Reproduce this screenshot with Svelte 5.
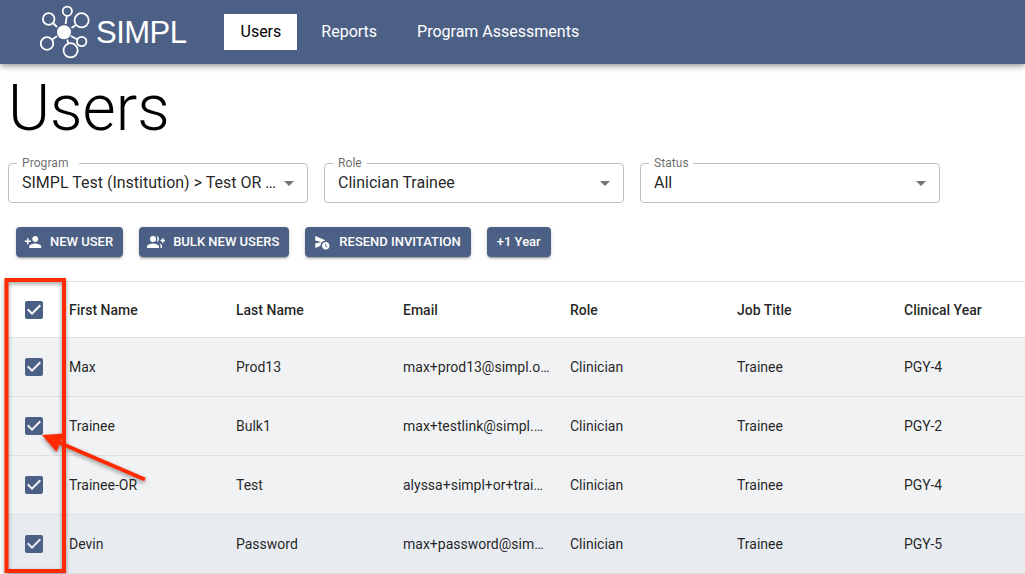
<script lang="ts">
  interface User {
    first: string;
    last: string;
    email: string;
    role: string;
    title: string;
    year: string;
    hovered?: boolean;
  }

  const navItems = ['Users', 'Reports', 'Program Assessments'];
  let activeNav = 'Users';

  const filters = [
    { label: 'Program', value: 'SIMPL Test (Institution) > Test OR Program', notch: 62 },
    { label: 'Role', value: 'Clinician Trainee', notch: 34 },
    { label: 'Status', value: 'All', notch: 44 },
  ];

  const columns = ['First Name', 'Last Name', 'Email', 'Role', 'Job Title', 'Clinical Year'];

  const users: User[] = [
    { first: 'Max', last: 'Prod13', email: 'max+prod13@simpl.org', role: 'Clinician', title: 'Trainee', year: 'PGY-4' },
    { first: 'Trainee', last: 'Bulk1', email: 'max+testlink@simpl.org', role: 'Clinician', title: 'Trainee', year: 'PGY-2' },
    { first: 'Trainee-OR', last: 'Test', email: 'alyssa+simpl+or+trai…', role: 'Clinician', title: 'Trainee', year: 'PGY-4' },
    { first: 'Devin', last: 'Password', email: 'max+password@simpl.org', role: 'Clinician', title: 'Trainee', year: 'PGY-5', hovered: true },
  ];
</script>

{#snippet checkbox()}
  <span class="check-cell" role="checkbox" aria-checked="true" tabindex="0">
    <svg class="check" viewBox="0 0 24 24">
      <path d="M19 3H5c-1.11 0-2 .9-2 2v14c0 1.1.89 2 2 2h14c1.11 0 2-.9 2-2V5c0-1.1-.89-2-2-2zm-9 14l-5-5 1.41-1.41L10 14.17l7.59-7.59L19 8l-9 9z" />
    </svg>
  </span>
{/snippet}

<div class="page">
  <header class="app-bar">
    <div class="brand">
      <svg class="brand-mark" width="52" height="56" viewBox="38 4 52 56">
        <g fill="none" stroke="#fff" stroke-width="1.8">
          <circle cx="67.3" cy="11.2" r="4.6" />
          <circle cx="48.7" cy="19" r="5.8" />
          <circle cx="81.6" cy="20.3" r="7.1" />
          <circle cx="47" cy="43.5" r="6.3" />
          <circle cx="70.6" cy="50.3" r="7.1" />
          <circle cx="81.7" cy="41.5" r="4.7" />
          <path d="M66.8 16 65.6 24M53 23 57 27M76 25 71.5 28M52 39.5 57 36.3M67.2 39.5 68.3 43.5M70.8 36 77.5 39.5" />
        </g>
        <circle cx="64" cy="32.3" r="7" fill="#fff" />
      </svg>
      <span class="brand-name">SIMPL</span>
    </div>
    <nav>
      {#each navItems as item}
        <button class="nav-item" class:active={item === activeNav} on:click={() => (activeNav = item)}>{item}</button>
      {/each}
    </nav>
  </header>

  <main>
    <h1>Users</h1>

    <div class="filters">
      {#each filters as filter}
        <div class="select">
          <span class="select-label" style="width: {filter.notch}px">{filter.label}</span>
          <span class="select-value">{filter.value}</span>
          <svg class="caret" viewBox="0 0 24 24"><path d="M7 10l5 5 5-5z" /></svg>
        </div>
      {/each}
    </div>

    <div class="actions">
      <button class="action">
        <svg viewBox="0 0 24 24">
          <path d="M15 12c2.21 0 4-1.79 4-4s-1.79-4-4-4-4 1.79-4 4 1.79 4 4 4zm-9-2V7H4v3H1v2h3v3h2v-3h3v-2H6zm9 4c-2.67 0-8 1.34-8 4v2h16v-2c0-2.66-5.33-4-8-4z" />
        </svg>
        NEW USER
      </button>
      <button class="action">
        <svg viewBox="0 0 24 24">
          <path d="M22 9V7h-2v2h-2v2h2v2h2v-2h2V9z" />
          <circle cx="8" cy="8" r="4" />
          <path d="M8 14c-2.67 0-8 1.34-8 4v2h16v-2c0-2.66-5.33-4-8-4zM12.51 4.05C13.43 5.11 14 6.49 14 8s-.57 2.89-1.49 3.95C14.47 11.7 16 10.04 16 8s-1.53-3.7-3.49-3.95zM16.53 13.83C17.42 14.66 18 15.7 18 17v3h2v-3c0-1.45-1.59-2.51-3.47-3.17z" />
        </svg>
        BULK NEW USERS
      </button>
      <button class="action">
        <svg viewBox="0 0 24 24">
          <path d="M17 10c.1 0 .19.01.28.01L3 4v6l8 2-8 2v6l7-2.95V17c0-3.86 3.14-7 7-7z" />
          <path d="M17 12c-2.76 0-5 2.24-5 5s2.24 5 5 5 5-2.24 5-5-2.24-5-5-5zm1.65 7.35L16.5 17.2V14h1v2.79l1.85 1.85-.7.71z" />
        </svg>
        RESEND INVITATION
      </button>
      <button class="action">+1 Year</button>
    </div>

    <div class="table">
      <div class="row head">
        {@render checkbox()}
        {#each columns as column}
          <span class="cell">{column}</span>
        {/each}
      </div>
      {#each users as user}
        <div class="row" class:hovered={user.hovered}>
          {@render checkbox()}
          <span class="cell">{user.first}</span>
          <span class="cell">{user.last}</span>
          <span class="cell">{user.email}</span>
          <span class="cell">{user.role}</span>
          <span class="cell">{user.title}</span>
          <span class="cell">{user.year}</span>
        </div>
      {/each}
    </div>
  </main>

  <svg class="callout" width="160" height="304" viewBox="0 270 160 304">
    <rect x="6.5" y="280" width="57.5" height="291" fill="none" stroke="#ff2a00" stroke-width="4" />
    <path d="M145 479.5 60 443" stroke="#ff2a00" stroke-width="4" />
    <path d="M42 435 64 433.5 56.5 452z" fill="#ff2a00" />
  </svg>
</div>

<style>
  :global(body) {
    background: #fff;
    overflow: hidden;
  }

  .page {
    position: relative;
    height: 574px;
    overflow: hidden;
    font-family: Roboto, 'Liberation Sans', sans-serif;
    color: rgba(0, 0, 0, 0.87);
  }

  button {
    border: none;
    font-family: inherit;
    cursor: pointer;
  }

  .app-bar {
    display: flex;
    align-items: center;
    height: 64px;
    background: #4c6085;
    box-shadow: 0 2px 4px -1px rgba(0, 0, 0, 0.2), 0 4px 5px rgba(0, 0, 0, 0.14), 0 1px 10px rgba(0, 0, 0, 0.12);
  }

  .brand {
    display: flex;
    align-items: center;
    gap: 6px;
    width: 186px;
    padding-left: 38px;
  }

  .brand-name {
    padding-top: 2px;
    color: #fff;
    font: 31px/64px 'Liberation Sans', Arial, sans-serif;
    letter-spacing: -0.5px;
  }

  nav {
    display: flex;
    gap: 8px;
  }

  .nav-item {
    height: 36px;
    padding: 0 16px;
    background: transparent;
    color: #fff;
    font-size: 16px;
    line-height: 36px;
    white-space: nowrap;
  }

  .nav-item.active {
    padding: 0 16px 0 16.5px;
    background: #fff;
    color: #000;
  }

  main {
    padding: 9px 0 0 8px;
  }

  h1 {
    margin: 0;
    color: #000;
    font-size: 64px;
    font-weight: 300;
    line-height: 72px;
  }

  .filters {
    display: flex;
    gap: 16px;
    padding-top: 18px;
  }

  .select {
    position: relative;
    display: flex;
    align-items: center;
    box-sizing: border-box;
    width: 300px;
    height: 40px;
    padding: 0 6px 0 13px;
    border: 1px solid #bfbfbf;
    border-radius: 4px;
  }

  .select-label {
    position: absolute;
    top: -8px;
    left: 8px;
    box-sizing: border-box;
    padding-left: 5px;
    background: #fff;
    color: rgba(0, 0, 0, 0.6);
    font-size: 12px;
    line-height: 14px;
    letter-spacing: 0.07px;
  }

  .select-value {
    flex: 1;
    overflow: hidden;
    text-overflow: ellipsis;
    white-space: nowrap;
    padding-bottom: 2px;
    font-size: 16px;
    line-height: 23px;
  }

  .caret {
    flex: none;
    width: 24px;
    height: 24px;
    fill: rgba(0, 0, 0, 0.54);
  }

  .actions {
    display: flex;
    gap: 16px;
    padding: 24px 8px;
  }

  .action {
    display: flex;
    align-items: center;
    height: 30px;
    padding: 0 10px 1px;
    border-radius: 4px;
    background: #4c6085;
    color: #fff;
    font-size: 13px;
    font-weight: 500;
    line-height: 15px;
    white-space: nowrap;
    box-shadow: 0 3px 1px -2px rgba(0, 0, 0, 0.2), 0 2px 2px rgba(0, 0, 0, 0.14), 0 1px 5px rgba(0, 0, 0, 0.12);
  }

  .action svg {
    width: 18px;
    height: 18px;
    margin: 1px 8px 0 -2px;
    fill: currentColor;
  }

  .table {
    border-top: 1px solid #e0e0e0;
  }

  .row {
    display: grid;
    grid-template-columns: 51px repeat(6, 167px);
    align-items: center;
    height: 58px;
    border-bottom: 1px solid #dddfe1;
    background: #f1f2f4;
    font-size: 14px;
  }

  .row.head {
    height: 55px;
    background: #fff;
    font-weight: 500;
  }

  .row.hovered {
    background: #e8ebf0;
  }

  .cell {
    box-sizing: border-box;
    padding: 0 9px 0 10px;
    overflow: hidden;
    text-overflow: ellipsis;
    white-space: nowrap;
    line-height: 20px;
  }

  .check-cell {
    display: flex;
    padding-left: 14px;
  }

  .check {
    width: 24px;
    height: 24px;
    fill: #4c6085;
  }

  .callout {
    position: absolute;
    top: 270px;
    left: 0;
    pointer-events: none;
    filter: drop-shadow(0 2px 2px rgba(0, 0, 0, 0.4));
  }
</style>
